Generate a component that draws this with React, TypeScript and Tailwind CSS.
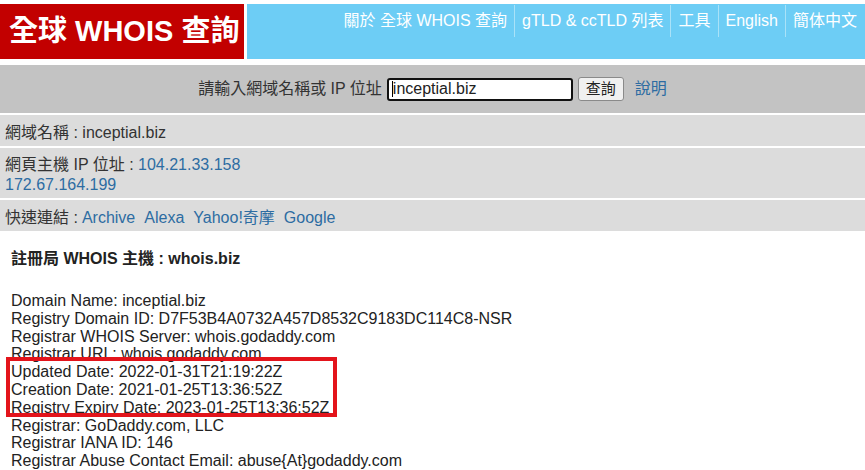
const font = { fontFamily: '"Liberation Sans", Arial, "Noto Sans CJK TC", sans-serif' }

const navItems = ['關於 全球 WHOIS 查詢', 'gTLD & ccTLD 列表', '工具', 'English', '簡体中文']

const whoisLines = [
    'Domain Name: inceptial.biz',
    'Registry Domain ID: D7F53B4A0732A457D8532C9183DC114C8-NSR',
    'Registrar WHOIS Server: whois.godaddy.com',
    'Registrar URL: whois.godaddy.com',
    'Updated Date: 2022-01-31T21:19:22Z',
    'Creation Date: 2021-01-25T13:36:52Z',
    'Registry Expiry Date: 2023-01-25T13:36:52Z',
    'Registrar: GoDaddy.com, LLC',
    'Registrar IANA ID: 146',
    'Registrar Abuse Contact Email: abuse{At}godaddy.com',
]

export default function App() {
    return (
        <div className="w-[865px] h-[470px] overflow-hidden bg-white text-[16px] text-[#333]" style={font}>
            {/* header */}
            <div className="flex pt-[4px] gap-[3px]">
                <div className="w-[244px] h-[55px] bg-[#c20000] flex items-center pl-[9px]">
                    <span className="text-white font-bold text-[29px]">全球 WHOIS 查詢</span>
                </div>
                <div className="flex-1 h-[55px] bg-[#6dcdf5] flex justify-end items-start pr-[1px]">
                    {navItems.map((item, i) => (
                        <div key={item} className={`h-[32px] mt-[1px] flex items-center px-[7px] text-white ${i > 0 ? 'border-l border-[#a9e2f8]' : ''}`}>
                            {item}
                        </div>
                    ))}
                </div>
            </div>

            {/* search */}
            <div className="mt-[6px] h-[48px] bg-[#c3c3c3] flex items-center justify-center">
                <span className="text-[#333]">請輸入網域名稱或 IP 位址</span>
                <div className="ml-[5px] w-[186px] h-[23px] border-2 border-[#111] rounded-[3px] bg-white flex items-center pl-[3px]">
                    <span className="w-px h-[16px] bg-black" />
                    <span className="text-[#222]">inceptial.biz</span>
                </div>
                <button className="ml-[5px] w-[46px] h-[24px] bg-[#f0f0f0] border border-[#8a8a8a] rounded-[3px] text-[15px] text-[#222]">查詢</button>
                <a className="ml-[11px] text-[#2d6ca2]">說明</a>
            </div>

            {/* info rows */}
            <div className="mt-[2px] flex flex-col gap-[2px]">
                <div className="h-[31px] bg-[#dcdcdc] px-[5px] pt-[4px] flex items-center">
                    網域名稱 : inceptial.biz
                </div>
                <div className="h-[50px] bg-[#dcdcdc] px-[5px] pt-[4px] flex flex-col justify-center leading-[20px]">
                    <div>網頁主機 IP 位址 : <span className="text-[#2d6ca2]">104.21.33.158</span></div>
                    <div className="text-[#2d6ca2]">172.67.164.199</div>
                </div>
                <div className="h-[31px] bg-[#dcdcdc] px-[5px] pt-[4px] flex items-center">
                    快速連結 : <span className="text-[#2d6ca2] ml-[4px] flex gap-[9px]"><span>Archive</span><span>Alexa</span><span>Yahoo!奇摩</span><span>Google</span></span>
                </div>
            </div>

            {/* whois result */}
            <div className="relative px-[11px] pt-[19px] text-[#222]">
                <div className="font-bold leading-[17px]">註冊局 WHOIS 主機 : whois.biz</div>
                <div className="mt-[25px] leading-[17.8px]">
                    {whoisLines.map((line) => (
                        <div key={line}>{line}</div>
                    ))}
                </div>
                <div className="absolute left-[6px] top-[126px] w-[331px] h-[60px] border-[4px] border-[#e3141b]" />
            </div>
        </div>
    )
}
